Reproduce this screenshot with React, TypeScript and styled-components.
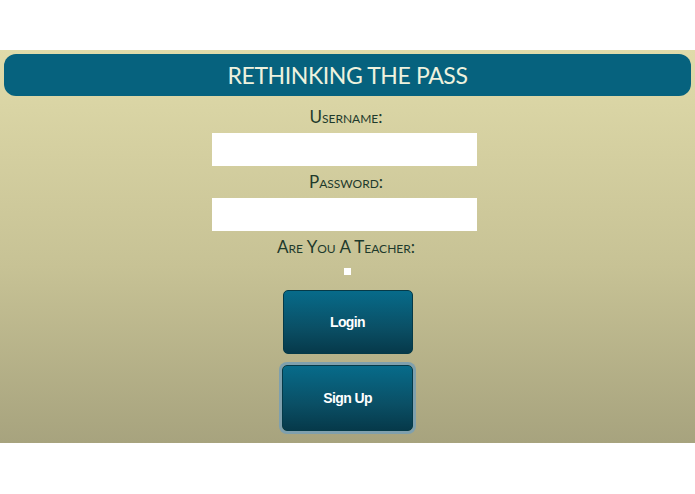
import React from "react";
import styled, { createGlobalStyle } from "styled-components";

const GlobalStyle = createGlobalStyle`
  html, body {
    margin: 0;
    padding: 0;
    background: #ffffff;
  }
`;

export default function App() {
  return (
    <>
      <GlobalStyle />
      <Page>
        <Stage>
          <Header>RETHINKING THE PASS</Header>
          <Form>
            <Label>Username:</Label>
            <TextInput type="text" />
            <Label>Password:</Label>
            <TextInput type="password" />
            <Label>Are You A Teacher:</Label>
            <Check type="checkbox" />
            <Button>Login</Button>
            <Button focused>Sign Up</Button>
          </Form>
        </Stage>
      </Page>
    </>
  );
}

const Page = styled.div`
  padding: 50px 0 51px;
  font-family: "Lato", "Open Sans", sans-serif;
`;

const Stage = styled.div`
  height: 393px;
  padding: 4px 4px 0;
  box-sizing: border-box;
  background: linear-gradient(to bottom, #e0dbaa 0%, #c7c295 55%, #a7a37e 100%);
  overflow: hidden;
`;

const Header = styled.div`
  height: 42px;
  display: flex;
  align-items: center;
  justify-content: center;
  background: #06627e;
  border-radius: 12px;
  color: #eef2de;
  font-size: 23px;
  letter-spacing: -0.4px;
`;

const Form = styled.div`
  display: flex;
  flex-direction: column;
  align-items: center;
  padding-top: 9px;
`;

const Label = styled.div`
  font-variant: small-caps;
  font-size: 17px;
  line-height: 24px;
  color: #1e3a2c;
  margin-bottom: 4px;
  margin-right: 3px;
`;

const TextInput = styled.input`
  width: 265px;
  height: 33px;
  box-sizing: border-box;
  border: none;
  background: #ffffff;
  margin: 0 6px 4px 0;
  outline: none;
`;

const Check = styled.input`
  appearance: none;
  display: block;
  width: 7px;
  height: 7px;
  margin: 5px 0 15px;
  padding: 0;
  background: #ffffff;
  border: none;
`;

const Button = styled.button<{ focused?: boolean }>`
  width: ${({ focused }) => (focused ? "131px" : "130px")};
  height: ${({ focused }) => (focused ? "66px" : "64px")};
  margin-bottom: 11px;
  border-radius: 5px;
  border: 1px solid #053a48;
  background: linear-gradient(to bottom, #076b8a 0%, #0a4f65 60%, #06394a 100%);
  color: #ffffff;
  font-family: "Liberation Sans", Arial, sans-serif;
  font-weight: bold;
  font-size: 14px;
  letter-spacing: -0.6px;
  box-shadow: ${({ focused }) => (focused ? "0 0 0 3px #7fa0ad" : "none")};
  cursor: pointer;
`;
